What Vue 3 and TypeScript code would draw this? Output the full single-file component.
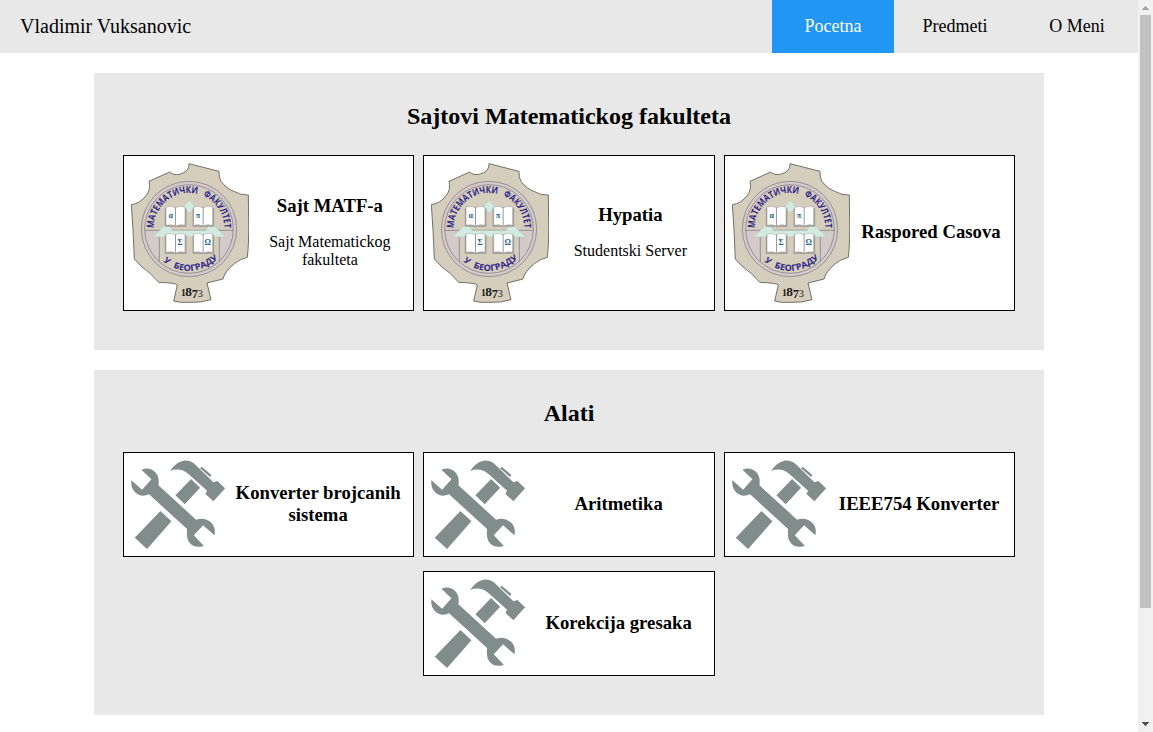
<script setup lang="ts">
interface Card {
  title: string
  text?: string
}
interface Section {
  title: string
  icon: 'crest' | 'tools'
  cards: Card[]
}

const links: string[] = ['Pocetna', 'Predmeti', 'O Meni']

const sections: Section[] = [
  {
    title: 'Sajtovi Matematickog fakulteta',
    icon: 'crest',
    cards: [
      { title: 'Sajt MATF-a', text: 'Sajt Matematickog fakulteta' },
      { title: 'Hypatia', text: 'Studentski Server' },
      { title: 'Raspored Casova' },
    ],
  },
  {
    title: 'Alati',
    icon: 'tools',
    cards: [
      { title: 'Konverter brojcanih sistema' },
      { title: 'Aritmetika' },
      { title: 'IEEE754 Konverter' },
      { title: 'Korekcija gresaka' },
    ],
  },
]
</script>

<template>
  <svg class="sprite" aria-hidden="true">
    <defs>
      <path id="arc-top" d="M101 235A106 106 0 0 1 313 235V260" />
      <path id="arc-bottom" d="M129 334Q207 394 291 329L310 312" />
      <g id="book">
        <path d="M0 6V60H28L31 62L34 60H62V6" fill="#b9b4ab" stroke="#77736d" stroke-width="1.5" />
        <path d="M2 2Q17 -3 30 4Q45 -3 59 2V57Q45 53 31 59Q17 53 2 57Z" fill="#fff" stroke="#8a8a90" stroke-width="1.5" />
        <path d="M30.5 4V58" stroke="#66666e" stroke-width="2" />
      </g>
    </defs>
  </svg>

  <div class="window">
    <div class="page">
      <header class="nav">
        <div class="brand">Vladimir Vuksanovic</div>
        <nav class="links">
          <a v-for="(link, i) in links" :key="link" class="link" :class="{ active: i === 0 }">{{ link }}</a>
        </nav>
      </header>
      <main class="content">
        <section v-for="section in sections" :key="section.title" class="section">
          <h2>{{ section.title }}</h2>
          <div class="cards">
            <a v-for="card in section.cards" :key="card.title" class="card">
              <svg v-if="section.icon === 'crest'" class="crest" viewBox="33 39 354 420">
                <path
                  d="M207 41L297 64Q296 82 303 94Q320 117 344 125Q362 136 385 135L386 210Q387 280 382 322Q362 326 343 341Q315 363 309 387L261 399L273 449Q242 459 207 457Q180 459 161 453L172 405Q169 399 116 397Q92 368 66 351L43 327L39 240L34 164Q61 160 78 137Q93 120 87 94L149 66Q159 76 178 73Q209 65 207 41Z"
                  fill="#d6cebc" stroke="#5c5850" stroke-width="2.5" stroke-linejoin="round"
                />
                <circle cx="207" cy="237" r="143" fill="#d4caca" stroke="#77717b" stroke-width="2" />
                <path d="M74 241A133 133 0 0 1 340 241Z" fill="#d6cebc" />
                <path d="M118 241H298V334A133 133 0 0 1 118 334Z" fill="#d6cebc" />
                <circle cx="207" cy="237" r="133" fill="none" stroke="#77717b" stroke-width="2" />
                <path d="M74 241H340M118 258V335M298 258V335" fill="none" stroke="#77717b" stroke-width="2" />
                <path d="M207 151L226 171V181H217L207 188L198 181H190V170Z" fill="#d2ebe0" stroke="#a9bcb4" />
                <path d="M134 226H148L155 242H259L265 226H280L317 261H98Z" fill="#d2ebe0" stroke="#a9bcb4" />
                <use href="#book" x="136" y="169" />
                <use href="#book" x="219" y="169" />
                <use href="#book" x="136" y="250" />
                <use href="#book" x="219" y="250" />
                <path d="M148 231L157 242H259L266 231L285 242V250H129V242Z" fill="#d2ebe0" />
                <g class="greek" text-anchor="middle">
                  <text x="152" y="205">α</text>
                  <text x="234" y="205">π</text>
                  <text x="180" y="284">Σ</text>
                  <text x="263" y="284">Ω</text>
                </g>
                <text class="motto"><textPath href="#arc-top" textLength="192" lengthAdjust="spacingAndGlyphs">МАТЕМАТИЧКИ</textPath></text>
                <text class="motto"><textPath href="#arc-top" startOffset="209" textLength="123" lengthAdjust="spacingAndGlyphs">ФАКУЛТЕТ</textPath></text>
                <text class="motto lower"><textPath href="#arc-bottom" textLength="18" lengthAdjust="spacingAndGlyphs">У</textPath></text>
                <text class="motto lower"><textPath href="#arc-bottom" startOffset="35" textLength="146" lengthAdjust="spacingAndGlyphs">БЕОГРАДУ</textPath></text>
                <g class="year">
                  <text x="183" y="438" font-size="29">1</text>
                  <text x="196" y="438" font-size="40">8</text>
                  <text x="215" y="444" font-size="37">7</text>
                  <text x="233" y="441" font-size="31" font-weight="400">3</text>
                </g>
              </svg>
              <svg v-else class="tools" viewBox="33 35 283 267">
                <g fill="#818d8b">
                  <path d="M213 92L240 118L194 168L166 141Z" />
                  <path d="M121 188L154 219L81 302L44 268Z" />
                  <path d="M150 68Q166 42 190 37Q213 35 230 53L280 102L292 98L315 120L280 159L256 137L261 127L205 77Q180 56 150 68Z" />
                  <path d="M245 55L274 80L270 86L240 60Z" />
                  <path d="M64 64Q88 54 105 71Q119 85 115 111L228 214Q254 206 272 222Q288 236 283 261L249 231L221 261L251 292Q226 302 209 284Q198 271 201 242L87 138Q63 149 45 132Q31 117 34 96L66 124L94 93Z" />
                </g>
              </svg>
              <div class="info">
                <h3>{{ card.title }}</h3>
                <p v-if="card.text">{{ card.text }}</p>
              </div>
            </a>
          </div>
        </section>
      </main>
    </div>
    <div class="scrollbar">
      <svg class="arrow" viewBox="0 0 15 15"><path d="M4 10H11L8 6H7Z" fill="#a3a3a3" /></svg>
      <div class="thumb"></div>
      <svg class="arrow end" viewBox="0 0 15 15"><path d="M4 5H11L8 9H7Z" fill="#505050" /></svg>
    </div>
  </div>
</template>

<style>
body {
  margin: 0;
  overflow: hidden;
}
</style>

<style scoped>
.sprite {
  position: absolute;
  width: 0;
  height: 0;
}
.window {
  display: flex;
  height: 732px;
  overflow: hidden;
  background: #fff;
  color: #000;
  font-family: "Liberation Serif", serif;
  font-size: 16px;
}
.page {
  flex: 1;
}
.nav {
  display: flex;
  justify-content: space-between;
  height: 53px;
  background: #e8e8e8;
  line-height: 53px;
}
.brand {
  padding-left: 20px;
  font-size: 20px;
}
.links {
  display: flex;
  font-size: 18px;
}
.link {
  width: 122px;
  text-align: center;
}
.link.active {
  background: #2196f3;
  color: #fff;
}
.content {
  display: flex;
  flex-direction: column;
  gap: 20px;
  width: 950px;
  margin: 20px auto 0;
}
.section {
  padding: 30px 28.75px 39px;
  background: #e8e8e8;
}
h2 {
  margin: 0 0 25px;
  font-size: 24px;
  line-height: 27px;
  text-align: center;
}
.cards {
  display: flex;
  flex-wrap: wrap;
  justify-content: center;
  gap: 14px 9px;
}
.card {
  display: flex;
  align-items: center;
  box-sizing: border-box;
  width: 291.5px;
  padding: 7px;
  border: 1px solid #000;
  background: #fff;
}
.crest {
  flex: none;
  width: 118px;
  height: 140px;
}
.tools {
  flex: none;
  width: 94.5px;
  height: 89px;
}
.info {
  flex: 1;
  margin-left: 4.75px;
  padding-bottom: 2px;
  text-align: center;
}
h3 {
  margin: 0;
  font-size: 18.72px;
  line-height: 22px;
}
p {
  margin: 16px 0 0;
  line-height: 18px;
}
.greek {
  fill: #17628f;
  font: bold 24px "Liberation Serif", serif;
}
.motto {
  fill: #30288a;
  font: bold 29px "Open Sans", "Noto Sans", sans-serif;
}
.lower {
  font-size: 26px;
}
.year {
  fill: #1c1a1a;
  font-family: "Liberation Serif", serif;
  font-weight: bold;
}
.scrollbar {
  display: flex;
  flex-direction: column;
  align-items: center;
  width: 15px;
  background: #f1f1f1;
}
.arrow {
  width: 15px;
  height: 15px;
  shape-rendering: crispEdges;
}
.arrow.end {
  margin-top: auto;
}
.thumb {
  width: 11px;
  height: 593px;
  background: #c1c1c1;
}
</style>
